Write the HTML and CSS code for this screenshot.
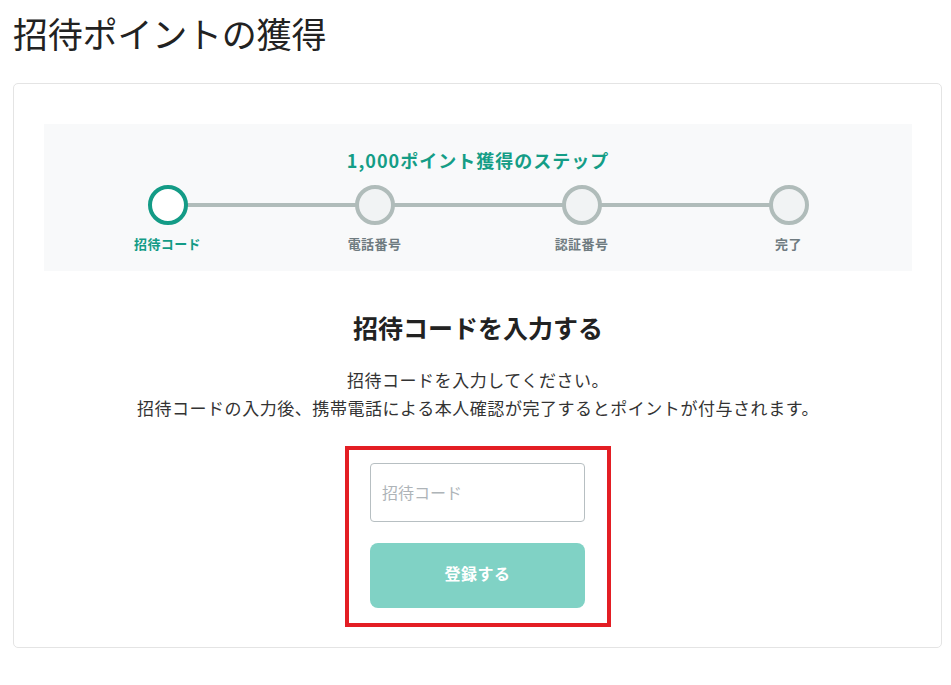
FILE: index.html
```html
<!DOCTYPE html>
<html lang="ja">
<head>
<meta charset="utf-8">
<title>招待ポイントの獲得</title>
<link rel="stylesheet" href="styles.css">
</head>
<body>
<div class="page">
  <h1 class="page-title">招待ポイントの獲得</h1>
  <div class="card">
    <div class="steps-panel">
      <div class="steps-title">1,000ポイント獲得のステップ</div>
      <div class="steps">
        <div class="step active"><span class="dot"></span><span class="label">招待コード</span></div>
        <div class="step"><span class="dot"></span><span class="label">電話番号</span></div>
        <div class="step"><span class="dot"></span><span class="label">認証番号</span></div>
        <div class="step last"><span class="dot"></span><span class="label">完了</span></div>
      </div>
    </div>
    <h2 class="form-heading">招待コードを入力する</h2>
    <p class="form-desc">招待コードを入力してください。<br>招待コードの入力後、携帯電話による本人確認が完了するとポイントが付与されます。</p>
    <div class="highlight">
      <input class="code-input" type="text" placeholder="招待コード">
      <button class="submit-btn" type="button">登録する</button>
    </div>
  </div>
</div>
</body>
</html>
```

FILE: styles.css
```css
* { box-sizing: border-box; }
body {
  margin: 0;
  background: #fff;
  font-family: "Noto Sans CJK JP", "Noto Sans", sans-serif;
  color: #222;
}
.page {
  padding: 10px 9px 0 13px;
}
.page-title {
  margin: 0;
  font-size: 35px;
  font-weight: 400;
  line-height: 46px;
  color: #222;
  letter-spacing: -0.2px;
}
.card {
  margin-top: 27px;
  border: 1px solid #e4e4e4;
  border-radius: 5px;
  padding: 40px 29px 20px 30px;
  display: flex;
  flex-direction: column;
  align-items: center;
}
.steps-panel {
  align-self: stretch;
  background: #f8f9fa;
  padding: 23px 20px 18px;
}
.steps-title {
  text-align: center;
  font-size: 18px;
  font-weight: 700;
  line-height: 26px;
  letter-spacing: 1px;
  color: #149d86;
}
.steps {
  margin-top: 12px;
  display: grid;
  grid-template-columns: repeat(4, 1fr);
}
.step {
  position: relative;
  display: flex;
  flex-direction: column;
  align-items: center;
}
.step::after {
  content: "";
  position: absolute;
  top: 18px;
  left: calc(50% + 18px);
  width: calc(100% - 36px);
  height: 4px;
  background: #b0bcba;
  z-index: 0;
}
.step.last::after { display: none; }
.dot {
  position: relative;
  z-index: 1;
  width: 40px;
  height: 40px;
  border-radius: 50%;
  border: 4px solid #b0bcba;
  background: #f1f3f4;
}
.step.active .dot {
  border-color: #139b86;
  background: #fff;
}
.label {
  margin-top: 10px;
  font-size: 13px;
  font-weight: 700;
  line-height: 18px;
  letter-spacing: 0.4px;
  color: #6f7b80;
}
.step.active .label { color: #139b86; }
.form-heading {
  margin: 38px 0 0;
  font-size: 25px;
  font-weight: 700;
  line-height: 36px;
  color: #222;
}
.form-desc {
  margin: 21px 0 0;
  text-align: center;
  font-size: 17px;
  line-height: 28px;
  letter-spacing: 0.55px;
  color: #333;
}
.highlight {
  margin-top: 24px;
  width: 266px;
  border: 4px solid #e31e24;
  padding: 13px 22px 15px 21px;
  display: flex;
  flex-direction: column;
  gap: 21px;
}
.code-input {
  width: 215px;
  height: 59px;
  border: 1px solid #b7bfc2;
  border-radius: 4px;
  padding: 0 11px 2px;
  font-family: inherit;
  font-size: 16px;
  color: #333;
  background: #fff;
  outline: none;
}
.code-input::placeholder { color: #aeb4b8; }
.submit-btn {
  width: 215px;
  height: 65px;
  border: none;
  border-radius: 8px;
  background: #80d2c5;
  color: #fff;
  font-family: inherit;
  font-size: 16px;
  font-weight: 700;
  letter-spacing: 0.5px;
  padding: 0 0 5px;
  cursor: pointer;
}
```
